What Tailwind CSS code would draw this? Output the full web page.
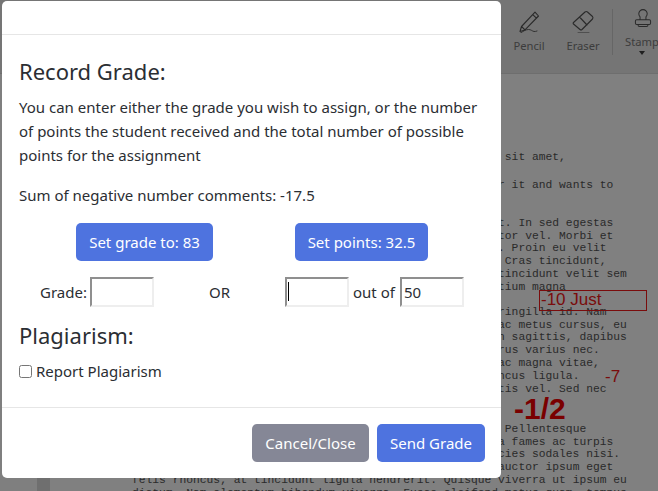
<!DOCTYPE html>
<html lang="en">
  <head>
    <meta charset="UTF-8" />
    <title>Record Grade</title>
    <script src="https://cdn.jsdelivr.net/npm/@tailwindcss/browser@4"></script>
  </head>
  <body class="relative h-[491px] w-[658px] overflow-hidden bg-[#7f7f7f] font-['Noto_Sans','Open_Sans',sans-serif]">
    <!-- viewer behind the dialog, already dimmed -->
    <div class="flex h-full flex-col">
      <div class="flex h-[74px] shrink-0 justify-end border-b border-[#6e6e6e] bg-[#757575] pt-[9px] text-[11.2px] text-[#3c3c3c]">
        <div class="flex w-[40px] -translate-x-px flex-col items-center">
          <svg class="h-[24px] w-[24px]" viewBox="0 0 24 24" fill="none" stroke="#2a2a2a" stroke-width="1.1" stroke-linejoin="round" stroke-linecap="round">
            <path d="M4.5 17.5L3 22.5l5-1.6L21.5 7 18 3.2 4.5 17.5zM15.8 5.6l3.6 3.6M4.5 17.5l3.5 3.4" />
            <path d="M3.5 24c2.500-1.500 5-3.500 8-3.500 2.500 0 3.500 1.500 5.500 2 1 .2 2-.2 3-.5" stroke-width="0.9" />
          </svg>
          <span class="mt-[5px]">Pencil</span>
        </div>
        <div class="ml-[13px] flex w-[40px] flex-col items-center">
          <svg class="h-[24px] w-[24px]" viewBox="0 0 24 24" fill="none" stroke="#2a2a2a" stroke-width="1.1" stroke-linejoin="round" stroke-linecap="round">
            <path d="M2.500 13.500L14 3a2 2 0 0 1 2.500 0L21.500 7.500a2 2 0 0 1 0 2.500L11 20.500a1.500 1.500 0 0 1-2 0L2.500 15a1 1 0 0 1 0-1.500zM8.500 8l7.500 8" />
            <path d="M7 24h11" />
          </svg>
          <span class="mt-[5px]">Eraser</span>
        </div>
        <div class="mb-[18px] ml-[9px] flex w-[46px] border-l border-[#666666]">
          <div class="ml-[12px] flex flex-col items-center">
            <svg class="-mt-[1px] h-[24px] w-[24px] translate-x-px" viewBox="0 0 24 24" fill="none" stroke="#2a2a2a" stroke-width="1.2" stroke-linejoin="round">
              <path d="M8.500 10.500a5 5 0 1 1 7 0V14h-7zM4.500 14h15a1.500 1.500 0 0 1 1.500 1.500V18a1.500 1.500 0 0 1-1.500 1.500h-15A1.500 1.500 0 0 1 3 18v-2.500A1.500 1.500 0 0 1 4.500 14zM6 19.500c0 1.500.5 2.500 2 2.500h8c1.500 0 2-1 2-2.500" />
            </svg>
            <span class="mt-[6px]">Stamp</span>
            <span class="h-0 w-0 border-x-[3px] border-t-[4px] border-x-transparent border-t-[#1f1f1f]"></span>
          </div>
        </div>
      </div>
      <div class="flex min-h-0 flex-1">
        <div class="w-[37px] shrink-0"></div>
        <div class="w-[13px] shrink-0 bg-[#6f6f6f]"></div>
        <div class="relative flex-1 bg-[#808080] pl-[82px] pt-[77px] font-['Liberation_Mono',monospace] text-[11.3px] leading-[12.85px] text-[#2a2a2a]">
          <p class="w-[64ch] text-right">Lorem ipsum dolor sit amet,</p>
          <p class="h-[15px]"></p>
          <p class="w-[71ch] text-right">Student writes about the author it and wants to</p>
          <p class="h-[25px]"></p>
          <p class="w-[71ch] text-right">Nam at nunc sit amet elit. In sed egestas</p>
          <p class="w-[71ch] text-right">lacus, sed porttitor vel. Morbi et</p>
          <p class="w-[70ch] text-right">vitae sem. Proin eu velit</p>
          <p class="w-[70ch] text-right">Cras tincidunt,</p>
          <p class="w-[73ch] text-right">tincidunt velit sem</p>
          <p class="w-[64ch] text-right">pretium magna</p>
          <p class="h-[12px]"></p>
          <p class="w-[70ch] text-right">fringilla id. Nam</p>
          <p class="w-[73ch] text-right">ac metus cursus, eu</p>
          <p class="w-[73ch] text-right">in sagittis, dapibus</p>
          <p class="w-[69ch] text-right">lorus varius nec.</p>
          <p class="w-[69ch] text-right">ac magna vitae,</p>
          <p class="w-[66ch] text-right">rhoncus ligula.</p>
          <p class="w-[70ch] text-right">mattis vel. Sed nec</p>
          <p class="h-[27px]"></p>
          <p class="w-[67ch] text-right">Pellentesque</p>
          <p class="w-[71ch] text-right">et malesuada fames ac turpis</p>
          <p class="w-[72ch] text-right">ultricies sodales nisi.</p>
          <p class="w-[71ch] text-right">auctor ipsum eget</p>
          <p class="w-[73ch] text-right">felis rhoncus, at tincidunt ligula hendrerit. Quisque viverra ut ipsum eu</p>
          <p class="w-[73ch] text-right">dictum. Nam elementum bibendum viverra. Fusce eleifend metus quam, tempus</p>

          <!-- annotations pinned on the document -->
          <div class="absolute left-[489px] top-[216px] h-[21px] w-[108px] border border-[#7a0c0c] pl-[1px] font-['Liberation_Sans',sans-serif] text-[17px] leading-[18px] text-[#7a0c0c]">-10 Just</div>
          <div class="absolute left-[555px] top-[294px] font-['Liberation_Sans',sans-serif] text-[17px] leading-[18px] text-[#7a0c0c]">-7</div>
          <div class="absolute left-[464px] top-[317px] font-['Liberation_Sans',sans-serif] text-[30px] font-bold leading-[36px] text-[#7a0000]">-1/2</div>
        </div>
      </div>
    </div>

    <!-- dialog -->
    <div class="absolute left-[2px] top-[1px] flex h-[477px] w-[499px] flex-col rounded-[5px] bg-white text-[15px] text-[#2b2e33]">
      <div class="h-[34px] shrink-0 border-b border-[#e6e6e6]"></div>
      <div class="flex-1 px-[17px] pt-[20px]">
        <h2 class="text-[22px] leading-[32px]">Record Grade:</h2>
        <p class="mt-[8px] leading-[24px]">You can enter either the grade you wish to assign, or the number of points the student received and the total number of possible points for the assignment</p>
        <p class="mt-[16px] leading-[24px]">Sum of negative number comments: -17.5</p>
        <div class="mt-[16px] flex">
          <button class="ml-[57px] h-[38px] w-[137px] rounded-[5px] bg-[#4e73df] text-white">Set grade to: 83</button>
          <button class="ml-[82px] h-[38px] w-[133px] rounded-[5px] bg-[#4e73df] text-white">Set points: 32.5</button>
        </div>
        <div class="mt-[16px] flex h-[30px] items-center">
          <span class="ml-[21px] w-[50px]">Grade:</span>
          <input type="text" class="h-[30px] w-[64px] border-2 border-t-[#8f8f8f] border-l-[#8f8f8f] border-r-[#eeeeee] border-b-[#eeeeee] px-[2px]" />
          <span class="ml-[55px] w-[76px]">OR</span>
          <div class="relative">
            <input type="text" class="block h-[30px] w-[64px] border-2 border-t-[#8f8f8f] border-l-[#8f8f8f] border-r-[#eeeeee] border-b-[#eeeeee] px-[2px]" />
            <span class="absolute left-[3px] top-[5px] h-[19px] w-px bg-black"></span>
          </div>
          <span class="ml-[4px] w-[47px]">out of</span>
          <input type="text" value="50" class="h-[30px] w-[64px] border-2 border-t-[#8f8f8f] border-l-[#8f8f8f] border-r-[#eeeeee] border-b-[#eeeeee] px-[2px]" />
        </div>
        <h2 class="mt-[13px] text-[22px] leading-[30px]">Plagiarism:</h2>
        <label class="mt-[9px] flex items-center leading-[24px]">
          <input type="checkbox" class="h-[13px] w-[13px]" />
          <span class="ml-[4px]">Report Plagiarism</span>
        </label>
      </div>
      <div class="flex h-[71px] shrink-0 items-start justify-end gap-[8px] border-t border-[#e6e6e6] pr-[16px] pt-[16px]">
        <button class="h-[38px] w-[117px] rounded-[5px] bg-[#858796] text-white">Cancel/Close</button>
        <button class="h-[38px] w-[108px] rounded-[5px] bg-[#4e73df] text-white">Send Grade</button>
      </div>
    </div>
  </body>
</html>
